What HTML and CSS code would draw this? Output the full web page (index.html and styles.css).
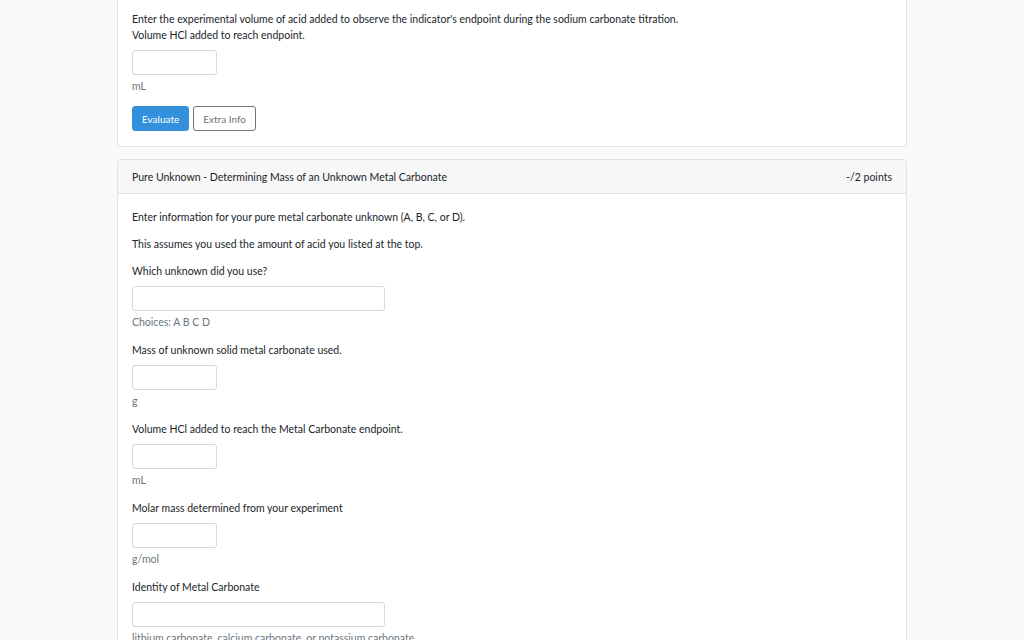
FILE: index.html
```html
<!DOCTYPE html>
<html>
<head>
	<meta charset="utf-8">
	<title>Lab Questions</title>
	<link rel="stylesheet" href="styles.css">
</head>
<body>
	<div class="container">
		<div class="card card-cut">
			<div class="card-body">
				<p class="tight">Enter the experimental volume of acid added to observe the indicator's endpoint during the sodium carbonate titration.</p>
				<div class="group">
					<label for="vol_na">Volume HCl added to reach endpoint.</label>
					<input id="vol_na" class="field small" type="text">
					<small>mL</small>
				</div>
				<div class="buttons">
					<button class="btn primary">Evaluate</button>
					<button class="btn outline">Extra Info</button>
				</div>
			</div>
		</div>

		<div class="card">
			<div class="card-header">
				<span>Pure Unknown - Determining Mass of an Unknown Metal Carbonate</span>
				<span>-/2 points</span>
			</div>
			<div class="card-body">
				<p>Enter information for your pure metal carbonate unknown (A, B, C, or D).</p>
				<p>This assumes you used the amount of acid you listed at the top.</p>
				<div class="group">
					<label for="unknown">Which unknown did you use?</label>
					<input id="unknown" class="field wide" type="text">
					<small>Choices: A B C D</small>
				</div>
				<div class="group">
					<label for="mass">Mass of unknown solid metal carbonate used.</label>
					<input id="mass" class="field small" type="text">
					<small>g</small>
				</div>
				<div class="group">
					<label for="vol_mc">Volume HCl added to reach the Metal Carbonate endpoint.</label>
					<input id="vol_mc" class="field small" type="text">
					<small>mL</small>
				</div>
				<div class="group">
					<label for="molar">Molar mass determined from your experiment</label>
					<input id="molar" class="field small" type="text">
					<small>g/mol</small>
				</div>
				<div class="group">
					<label for="identity">Identity of Metal Carbonate</label>
					<input id="identity" class="field wide" type="text">
					<small>lithium carbonate, calcium carbonate, or potassium carbonate</small>
				</div>
				<div class="buttons">
					<button class="btn primary">Evaluate</button>
					<button class="btn outline">Extra Info</button>
				</div>
			</div>
		</div>
	</div>
</body>
</html>
```
FILE: styles.css
```css
body{
	background-color: #f8fafc;
	margin: 0;
	font-family: "Lato", "Noto Sans", sans-serif;
	font-size: 10.5px;
	line-height: 16px;
	color: #212529;
}
.container{
	width: 790px;
	margin: 0 auto;
}
.card{
	background-color: white;
	border: 1px solid #e1e3e6;
	border-radius: 4px;
	margin-bottom: 12px;
}
.card-cut{
	border-top: 0;
	border-radius: 0 0 4px 4px;
}
.card-header{
	display: flex;
	justify-content: space-between;
	background-color: #f7f7f7;
	border-bottom: 1px solid #e1e3e6;
	padding: 9px 14px 8px 14px;
	border-radius: 4px 4px 0 0;
}
.card-body{
	padding: 15px 14px 15px 14px;
}
.card-cut .card-body{
	padding-top: 11px;
}
p{
	margin: 0 0 11px 0;
}
p.tight{
	margin: 0;
}
.group{
	display: flex;
	flex-direction: column;
	align-items: flex-start;
	margin-bottom: 12px;
}
.group label{
	margin-bottom: 7px;
}
.group small{
	font-size: 10.5px;
	color: #6c757d;
	margin-top: 3px;
}
.field{
	height: 25px;
	box-sizing: border-box;
	border: 1px solid #d5d9dd;
	border-radius: 3px;
	background: white;
}
.field.small{
	width: 85px;
}
.field.wide{
	width: 253px;
}
.buttons{
	display: flex;
	gap: 4px;
}
.btn{
	height: 25px;
	font-family: inherit;
	font-size: 10px;
	border-radius: 3px;
	padding: 0 9px;
}
.btn.primary{
	background-color: #3490dc;
	border: 1px solid #3490dc;
	color: white;
}
.btn.outline{
	background-color: white;
	border: 1px solid #6c757d;
	color: #6c757d;
}
```
